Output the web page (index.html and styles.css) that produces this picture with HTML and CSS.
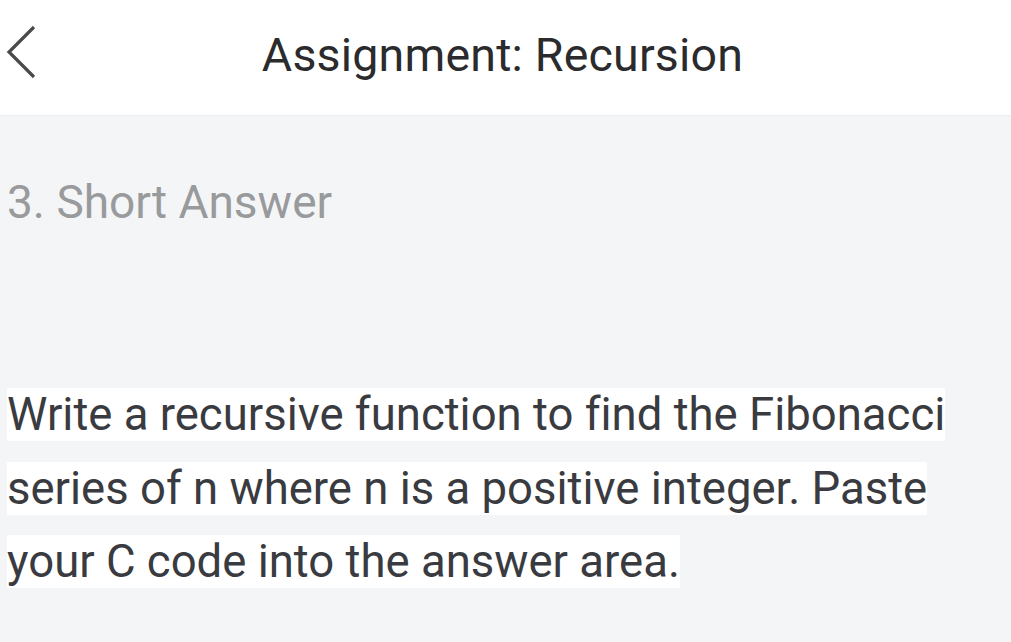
FILE: index.html
```html
<!DOCTYPE html>
<html>
<head>
<meta charset="utf-8">
<link rel="stylesheet" href="styles.css">
</head>
<body>
<header class="topbar">
  <button class="back" aria-label="Back">
    <svg width="32" height="54" viewBox="0 0 32 54"><path d="M29 2 L4 27 L29 52" fill="none" stroke="#4a4a4a" stroke-width="3.2"/></svg>
  </button>
  <h1 class="title">Assignment: Recursion</h1>
</header>
<main class="content">
  <h2 class="qtype">3. Short Answer</h2>
  <p class="question"><span class="hl">Write a recursive function to find the Fibonacci series of n where n is a positive integer. Paste your C code into the answer area.</span></p>
</main>
</body>
</html>
```
FILE: styles.css
```css
html, body {
  margin: 0;
  padding: 0;
}
body {
  width: 1011px;
  height: 642px;
  overflow: hidden;
  background: #f4f5f7;
  font-family: Roboto, "Noto Sans", sans-serif;
  font-variant-ligatures: none;
}
.topbar {
  position: relative;
  height: 115px;
  background: #ffffff;
  border-bottom: 1px solid #eceef1;
  display: flex;
  align-items: center;
  justify-content: center;
}
.back {
  position: absolute;
  left: 5px;
  top: 25px;
  padding: 0;
  border: 0;
  background: none;
  display: flex;
}
.title {
  margin: 0 6px 6px 0;
  font-weight: 400;
  font-size: 46.5px;
  color: #2b2b2d;
  letter-spacing: 0.2px;
}
.content {
  padding: 0 7px;
}
.qtype {
  margin: 0;
  padding-top: 56px;
  font-weight: 400;
  font-size: 46px;
  line-height: 60px;
  color: #999a9c;
}
.question {
  margin: 0;
  padding-top: 146px;
  font-size: 45.5px;
  line-height: 73.5px;
  color: #393b40;
  width: 980px;
}
.hl {
  background: #ffffff;
}
```
